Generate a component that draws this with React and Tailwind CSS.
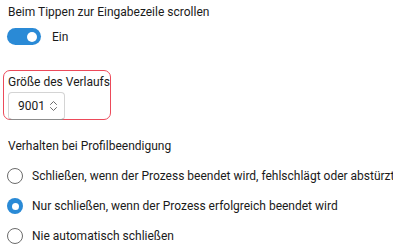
import React from "react";

function Radio({ checked, label }) {
  return (
    <div className="flex items-center h-[16px]">
      {checked ? (
        <div className="w-[16px] h-[16px] rounded-full bg-[#2a8ad6] flex items-center justify-center shrink-0">
          <div className="w-[7px] h-[7px] rounded-full bg-white" />
        </div>
      ) : (
        <div className="w-[16px] h-[16px] rounded-full border border-[#6b6b6b] bg-white shrink-0" />
      )}
      <span className="ml-[9px] text-[12px] leading-[16px] text-[#1a1a1a] whitespace-nowrap">{label}</span>
    </div>
  );
}

export default function App() {
  return (
    <div
      className="w-[393px] h-[244px] bg-white overflow-hidden text-[#1a1a1a] whitespace-nowrap"
      style={{ fontFamily: 'Roboto, "Noto Sans", sans-serif' }}
    >
      <div className="pt-[4px] pl-[8px] text-[12px] leading-[16px]">
        Beim Tippen zur Eingabezeile scrollen
      </div>
      <div className="flex items-center pl-[7px] mt-[8px]">
        <div className="w-[34px] h-[17px] rounded-full bg-[#2a8ad6] flex items-center justify-end pr-[4px]">
          <div className="w-[10px] h-[10px] rounded-full bg-white" />
        </div>
        <span className="ml-[11px] text-[12px] leading-[16px]">Ein</span>
      </div>
      <div className="ml-[3px] mt-[25px] w-[108px] h-[50px] border border-[#ec4a5a] rounded-[7px] pl-[4px] pt-[3px]">
        <div className="text-[12px] leading-[16px]">Größe des Verlaufs</div>
        <div className="mt-[2px] w-[57px] h-[28px] border border-[#d4d4d4] border-b-[#8c8c8c] rounded-[4px] flex items-center pl-[9px] pr-[6px] justify-between">
          <span className="text-[12px] leading-[16px]">9001</span>
          <svg width="9" height="12" viewBox="0 0 9 12" fill="none" stroke="#6b6b6b" strokeWidth="1" strokeLinecap="round" strokeLinejoin="round">
            <path d="M1.5 4.5 L4.5 1.5 L7.5 4.5" />
            <path d="M1.5 7.5 L4.5 10.5 L7.5 7.5" />
          </svg>
        </div>
      </div>
      <div className="pl-[8px] mt-[18px] text-[12px] leading-[16px]">
        Verhalten bei Profilbeendigung
      </div>
      <div className="pl-[7px] mt-[14px] flex flex-col gap-[14px]">
        <Radio label="Schließen, wenn der Prozess beendet wird, fehlschlägt oder abstürzt" />
        <Radio checked label="Nur schließen, wenn der Prozess erfolgreich beendet wird" />
        <Radio label="Nie automatisch schließen" />
      </div>
    </div>
  );
}
